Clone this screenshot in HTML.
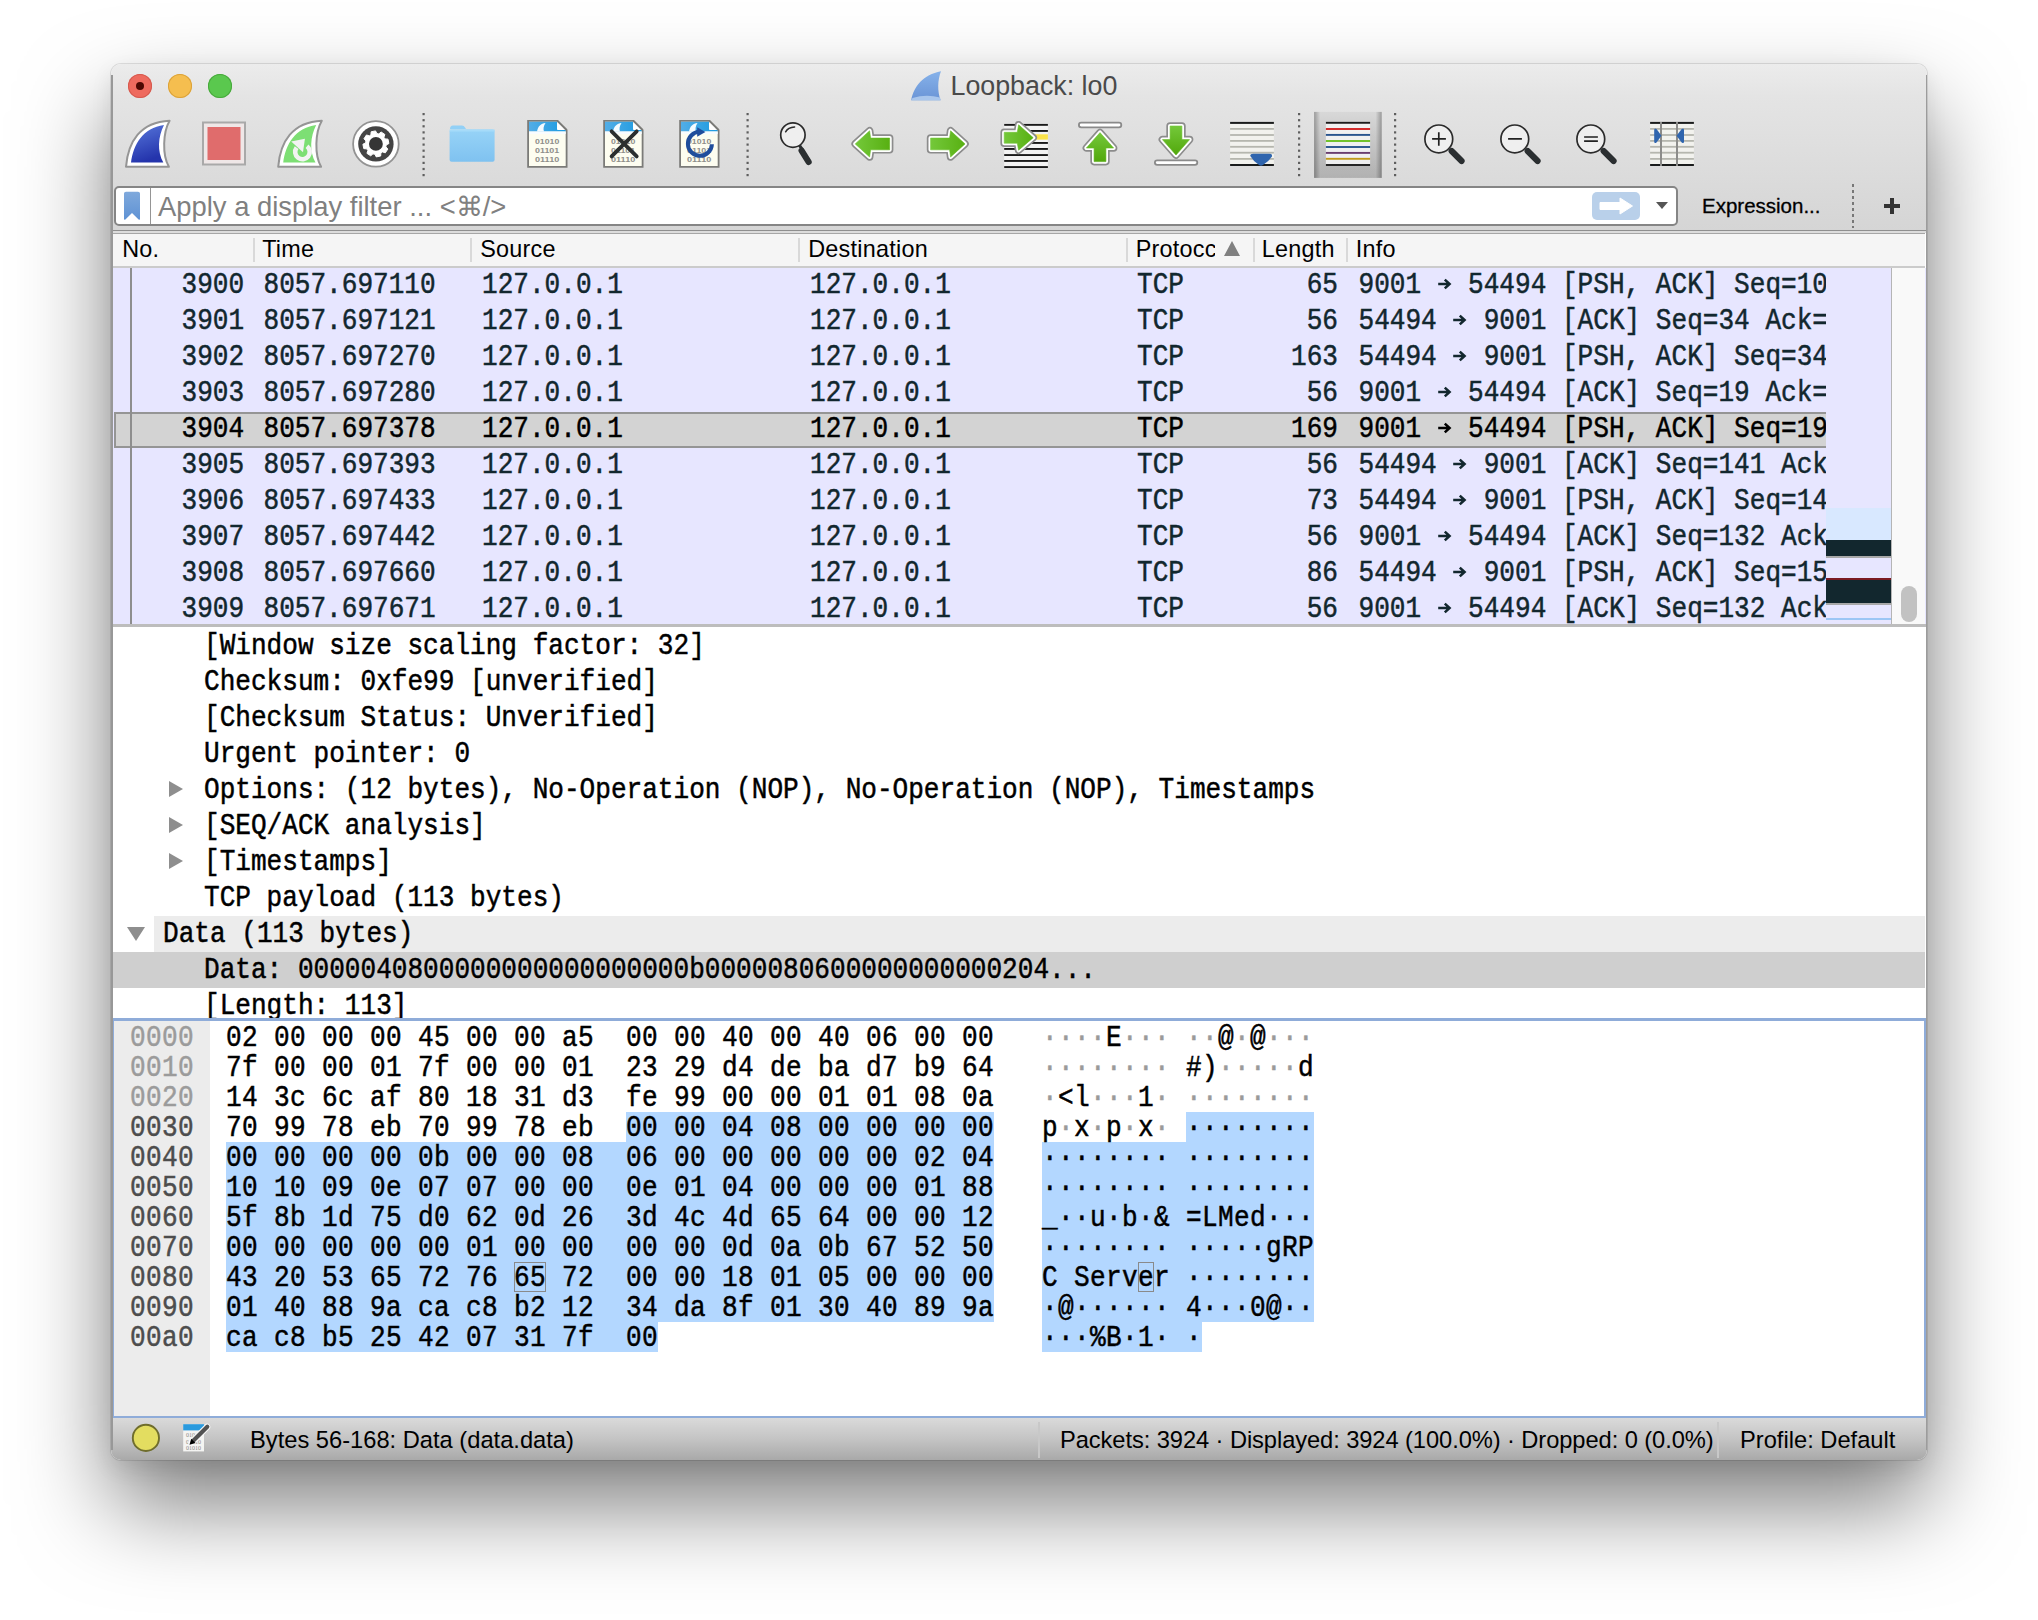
<!DOCTYPE html>
<html><head><meta charset="utf-8"><style>
*{margin:0;padding:0;box-sizing:border-box}
html,body{width:2038px;height:1620px;background:#fff;overflow:hidden;position:relative}
body{font-family:"Liberation Sans",sans-serif}
.a{position:absolute}
.m{font-family:"Liberation Mono",monospace;font-size:26.08px;white-space:pre;position:absolute;-webkit-text-stroke:0.45px currentColor}
.ar{font-weight:bold}
.r36{transform-origin:0 24.94px;transform:scaleY(1.11)}
.r30{transform-origin:0 21.94px;transform:scaleY(1.11)}
.s{font-family:"Liberation Sans",sans-serif;white-space:pre;position:absolute}
#win{position:absolute;left:111px;top:64px;width:1816px;height:1396px;border-radius:10px;overflow:hidden;background:#fff;
 box-shadow:0 0 0 1px rgba(0,0,0,0.10),0 46px 90px rgba(0,0,0,0.5),0 8px 22px rgba(0,0,0,0.08)}
</style></head><body>
<div id="win"><div class="a" style="left:-111px;top:-64px;width:2038px;height:1620px">
<div class="a" style="left:111px;top:63px;width:1816px;height:168px;background:linear-gradient(#ececec,#e4e4e4 20%,#d5d5d5)"></div>
<div class="a" style="left:111px;top:230px;width:1816px;height:1.2px;background:#8f8f8f"></div>
<div class="a" style="left:111px;top:231.2px;width:1816px;height:1.8px;background:#dcdcdc"></div>
<div class="a" style="left:128px;top:74px;width:24px;height:24px;border-radius:50%;background:#ee6a5e;box-shadow:inset 0 0 0 1px #d55a4f"></div>
<div class="a" style="left:168px;top:74px;width:24px;height:24px;border-radius:50%;background:#f5be4f;box-shadow:inset 0 0 0 1px #dba23a"></div>
<div class="a" style="left:208px;top:74px;width:24px;height:24px;border-radius:50%;background:#5ac84e;box-shadow:inset 0 0 0 1px #48a83d"></div>
<div class="a" style="left:136px;top:82px;width:8px;height:8px;border-radius:50%;background:#4d0802"></div>
<div class="s" style="left:950.5px;top:71px;font-size:26.8px;color:#4a4a4a">Loopback: lo0</div>
<div class="a" style="left:114px;top:186px;width:1564px;height:40px;border:2px solid #858585;border-radius:5px;background:#fff"></div>
<div class="a" style="left:149.5px;top:188px;width:1.6px;height:36px;background:#959595"></div>
<div class="s" style="left:158px;top:191.2px;font-size:27.4px;color:#808080">Apply a display filter ... &lt;⌘/&gt;</div>
<div class="a" style="left:1592px;top:192px;width:48px;height:28px;border-radius:5px;background:#b9d0ea"></div>
<div class="a" style="left:1656px;top:202px;width:0;height:0;border-left:6.5px solid transparent;border-right:6.5px solid transparent;border-top:7px solid #555"></div>
<div class="s" style="left:1702px;top:194px;font-size:20.5px;color:#000;-webkit-text-stroke:0.3px #000">Expression...</div>
<div class="a" style="left:1852px;top:184px;width:2px;height:44px;background-image:linear-gradient(#777 50%,transparent 50%);background-size:2px 6px"></div>
<div class="a" style="left:1884px;top:204px;width:16px;height:4px;background:#333"></div><div class="a" style="left:1890px;top:198px;width:4px;height:16px;background:#333"></div>
<div class="a" style="left:112px;top:233px;width:1813px;height:35px;background:#f5f5f5;border-top:1.2px solid #a6a6a6;border-bottom:2px solid #cbcbcb;border-left:1px solid #dadada"></div>
<div class="s" style="left:122.2px;top:236px;font-size:23.4px;letter-spacing:0.25px;color:#000">No.</div>
<div class="s" style="left:262.2px;top:236px;font-size:23.4px;letter-spacing:0.25px;color:#000">Time</div>
<div class="s" style="left:480.2px;top:236px;font-size:23.4px;letter-spacing:0.25px;color:#000">Source</div>
<div class="s" style="left:808.2px;top:236px;font-size:23.4px;letter-spacing:0.25px;color:#000">Destination</div>
<div class="a" style="left:1135px;top:234px;width:79.5px;height:32px;overflow:hidden"><div class="s" style="left:0.7px;top:2px;font-size:23.4px;letter-spacing:0.25px;color:#000">Protocc</div></div>
<div class="s" style="left:1261.7px;top:236px;font-size:23.4px;letter-spacing:0.25px;color:#000">Length</div>
<div class="s" style="left:1355.7px;top:236px;font-size:23.4px;letter-spacing:0.25px;color:#000">Info</div>
<div class="a" style="left:253px;top:238px;width:2px;height:24px;background:#d9d9d9"></div>
<div class="a" style="left:470px;top:238px;width:2px;height:24px;background:#d9d9d9"></div>
<div class="a" style="left:798px;top:238px;width:2px;height:24px;background:#d9d9d9"></div>
<div class="a" style="left:1126px;top:238px;width:2px;height:24px;background:#d9d9d9"></div>
<div class="a" style="left:1253px;top:238px;width:2px;height:24px;background:#d9d9d9"></div>
<div class="a" style="left:1346px;top:238px;width:2px;height:24px;background:#d9d9d9"></div>
<div class="a" style="left:1224px;top:241px;width:0;height:0;border-left:8px solid transparent;border-right:8px solid transparent;border-bottom:15px solid #808080"></div>
<div class="a" style="left:112px;top:268px;width:1814px;height:357px;background:#e7e6ff"></div>
<div class="m r36" style="left:181.5px;top:268px;line-height:36px;color:#12272e">3900</div>
<div class="m r36" style="left:263.5px;top:268px;line-height:36px;color:#12272e">8057.697110</div>
<div class="m r36" style="left:482.0px;top:268px;line-height:36px;color:#12272e">127.0.0.1</div>
<div class="m r36" style="left:810.0px;top:268px;line-height:36px;color:#12272e">127.0.0.1</div>
<div class="m r36" style="left:1137.0px;top:268px;line-height:36px;color:#12272e">TCP</div>
<div class="m r36" style="right:700.0px;top:268px;line-height:36px;color:#12272e">65</div>
<div class="a" style="left:1358.5px;top:268px;width:467.5px;height:36px;overflow:hidden"><div class="m r36" style="left:0;top:0;line-height:36px;color:#12272e">9001   54494 [PSH, ACK] Seq=10</div></div>
<svg class="a" style="left:1436.75px;top:278.2px;width:16px;height:12px;overflow:visible" viewBox="0 0 16 12"><path d="M1.2,6 H12 M7.8,1.6 L12.6,6 L7.8,10.4" fill="none" stroke="#12272e" stroke-width="2.5"/></svg>
<div class="m r36" style="left:181.5px;top:304px;line-height:36px;color:#12272e">3901</div>
<div class="m r36" style="left:263.5px;top:304px;line-height:36px;color:#12272e">8057.697121</div>
<div class="m r36" style="left:482.0px;top:304px;line-height:36px;color:#12272e">127.0.0.1</div>
<div class="m r36" style="left:810.0px;top:304px;line-height:36px;color:#12272e">127.0.0.1</div>
<div class="m r36" style="left:1137.0px;top:304px;line-height:36px;color:#12272e">TCP</div>
<div class="m r36" style="right:700.0px;top:304px;line-height:36px;color:#12272e">56</div>
<div class="a" style="left:1358.5px;top:304px;width:467.5px;height:36px;overflow:hidden"><div class="m r36" style="left:0;top:0;line-height:36px;color:#12272e">54494   9001 [ACK] Seq=34 Ack=</div></div>
<svg class="a" style="left:1452.40px;top:314.2px;width:16px;height:12px;overflow:visible" viewBox="0 0 16 12"><path d="M1.2,6 H12 M7.8,1.6 L12.6,6 L7.8,10.4" fill="none" stroke="#12272e" stroke-width="2.5"/></svg>
<div class="m r36" style="left:181.5px;top:340px;line-height:36px;color:#12272e">3902</div>
<div class="m r36" style="left:263.5px;top:340px;line-height:36px;color:#12272e">8057.697270</div>
<div class="m r36" style="left:482.0px;top:340px;line-height:36px;color:#12272e">127.0.0.1</div>
<div class="m r36" style="left:810.0px;top:340px;line-height:36px;color:#12272e">127.0.0.1</div>
<div class="m r36" style="left:1137.0px;top:340px;line-height:36px;color:#12272e">TCP</div>
<div class="m r36" style="right:700.0px;top:340px;line-height:36px;color:#12272e">163</div>
<div class="a" style="left:1358.5px;top:340px;width:467.5px;height:36px;overflow:hidden"><div class="m r36" style="left:0;top:0;line-height:36px;color:#12272e">54494   9001 [PSH, ACK] Seq=34</div></div>
<svg class="a" style="left:1452.40px;top:350.2px;width:16px;height:12px;overflow:visible" viewBox="0 0 16 12"><path d="M1.2,6 H12 M7.8,1.6 L12.6,6 L7.8,10.4" fill="none" stroke="#12272e" stroke-width="2.5"/></svg>
<div class="m r36" style="left:181.5px;top:376px;line-height:36px;color:#12272e">3903</div>
<div class="m r36" style="left:263.5px;top:376px;line-height:36px;color:#12272e">8057.697280</div>
<div class="m r36" style="left:482.0px;top:376px;line-height:36px;color:#12272e">127.0.0.1</div>
<div class="m r36" style="left:810.0px;top:376px;line-height:36px;color:#12272e">127.0.0.1</div>
<div class="m r36" style="left:1137.0px;top:376px;line-height:36px;color:#12272e">TCP</div>
<div class="m r36" style="right:700.0px;top:376px;line-height:36px;color:#12272e">56</div>
<div class="a" style="left:1358.5px;top:376px;width:467.5px;height:36px;overflow:hidden"><div class="m r36" style="left:0;top:0;line-height:36px;color:#12272e">9001   54494 [ACK] Seq=19 Ack=</div></div>
<svg class="a" style="left:1436.75px;top:386.2px;width:16px;height:12px;overflow:visible" viewBox="0 0 16 12"><path d="M1.2,6 H12 M7.8,1.6 L12.6,6 L7.8,10.4" fill="none" stroke="#12272e" stroke-width="2.5"/></svg>
<div class="a" style="left:114px;top:412px;width:1712px;height:36px;background:#d3d3d3;border:2px solid #959595;border-right:none"></div>
<div class="m r36" style="left:181.5px;top:412px;line-height:36px;color:#000">3904</div>
<div class="m r36" style="left:263.5px;top:412px;line-height:36px;color:#000">8057.697378</div>
<div class="m r36" style="left:482.0px;top:412px;line-height:36px;color:#000">127.0.0.1</div>
<div class="m r36" style="left:810.0px;top:412px;line-height:36px;color:#000">127.0.0.1</div>
<div class="m r36" style="left:1137.0px;top:412px;line-height:36px;color:#000">TCP</div>
<div class="m r36" style="right:700.0px;top:412px;line-height:36px;color:#000">169</div>
<div class="a" style="left:1358.5px;top:412px;width:467.5px;height:36px;overflow:hidden"><div class="m r36" style="left:0;top:0;line-height:36px;color:#000">9001   54494 [PSH, ACK] Seq=19</div></div>
<svg class="a" style="left:1436.75px;top:422.2px;width:16px;height:12px;overflow:visible" viewBox="0 0 16 12"><path d="M1.2,6 H12 M7.8,1.6 L12.6,6 L7.8,10.4" fill="none" stroke="#000" stroke-width="2.5"/></svg>
<div class="m r36" style="left:181.5px;top:448px;line-height:36px;color:#12272e">3905</div>
<div class="m r36" style="left:263.5px;top:448px;line-height:36px;color:#12272e">8057.697393</div>
<div class="m r36" style="left:482.0px;top:448px;line-height:36px;color:#12272e">127.0.0.1</div>
<div class="m r36" style="left:810.0px;top:448px;line-height:36px;color:#12272e">127.0.0.1</div>
<div class="m r36" style="left:1137.0px;top:448px;line-height:36px;color:#12272e">TCP</div>
<div class="m r36" style="right:700.0px;top:448px;line-height:36px;color:#12272e">56</div>
<div class="a" style="left:1358.5px;top:448px;width:467.5px;height:36px;overflow:hidden"><div class="m r36" style="left:0;top:0;line-height:36px;color:#12272e">54494   9001 [ACK] Seq=141 Ack</div></div>
<svg class="a" style="left:1452.40px;top:458.2px;width:16px;height:12px;overflow:visible" viewBox="0 0 16 12"><path d="M1.2,6 H12 M7.8,1.6 L12.6,6 L7.8,10.4" fill="none" stroke="#12272e" stroke-width="2.5"/></svg>
<div class="m r36" style="left:181.5px;top:484px;line-height:36px;color:#12272e">3906</div>
<div class="m r36" style="left:263.5px;top:484px;line-height:36px;color:#12272e">8057.697433</div>
<div class="m r36" style="left:482.0px;top:484px;line-height:36px;color:#12272e">127.0.0.1</div>
<div class="m r36" style="left:810.0px;top:484px;line-height:36px;color:#12272e">127.0.0.1</div>
<div class="m r36" style="left:1137.0px;top:484px;line-height:36px;color:#12272e">TCP</div>
<div class="m r36" style="right:700.0px;top:484px;line-height:36px;color:#12272e">73</div>
<div class="a" style="left:1358.5px;top:484px;width:467.5px;height:36px;overflow:hidden"><div class="m r36" style="left:0;top:0;line-height:36px;color:#12272e">54494   9001 [PSH, ACK] Seq=14</div></div>
<svg class="a" style="left:1452.40px;top:494.2px;width:16px;height:12px;overflow:visible" viewBox="0 0 16 12"><path d="M1.2,6 H12 M7.8,1.6 L12.6,6 L7.8,10.4" fill="none" stroke="#12272e" stroke-width="2.5"/></svg>
<div class="m r36" style="left:181.5px;top:520px;line-height:36px;color:#12272e">3907</div>
<div class="m r36" style="left:263.5px;top:520px;line-height:36px;color:#12272e">8057.697442</div>
<div class="m r36" style="left:482.0px;top:520px;line-height:36px;color:#12272e">127.0.0.1</div>
<div class="m r36" style="left:810.0px;top:520px;line-height:36px;color:#12272e">127.0.0.1</div>
<div class="m r36" style="left:1137.0px;top:520px;line-height:36px;color:#12272e">TCP</div>
<div class="m r36" style="right:700.0px;top:520px;line-height:36px;color:#12272e">56</div>
<div class="a" style="left:1358.5px;top:520px;width:467.5px;height:36px;overflow:hidden"><div class="m r36" style="left:0;top:0;line-height:36px;color:#12272e">9001   54494 [ACK] Seq=132 Ack</div></div>
<svg class="a" style="left:1436.75px;top:530.2px;width:16px;height:12px;overflow:visible" viewBox="0 0 16 12"><path d="M1.2,6 H12 M7.8,1.6 L12.6,6 L7.8,10.4" fill="none" stroke="#12272e" stroke-width="2.5"/></svg>
<div class="m r36" style="left:181.5px;top:556px;line-height:36px;color:#12272e">3908</div>
<div class="m r36" style="left:263.5px;top:556px;line-height:36px;color:#12272e">8057.697660</div>
<div class="m r36" style="left:482.0px;top:556px;line-height:36px;color:#12272e">127.0.0.1</div>
<div class="m r36" style="left:810.0px;top:556px;line-height:36px;color:#12272e">127.0.0.1</div>
<div class="m r36" style="left:1137.0px;top:556px;line-height:36px;color:#12272e">TCP</div>
<div class="m r36" style="right:700.0px;top:556px;line-height:36px;color:#12272e">86</div>
<div class="a" style="left:1358.5px;top:556px;width:467.5px;height:36px;overflow:hidden"><div class="m r36" style="left:0;top:0;line-height:36px;color:#12272e">54494   9001 [PSH, ACK] Seq=15</div></div>
<svg class="a" style="left:1452.40px;top:566.2px;width:16px;height:12px;overflow:visible" viewBox="0 0 16 12"><path d="M1.2,6 H12 M7.8,1.6 L12.6,6 L7.8,10.4" fill="none" stroke="#12272e" stroke-width="2.5"/></svg>
<div class="m r36" style="left:181.5px;top:592px;line-height:36px;color:#12272e">3909</div>
<div class="m r36" style="left:263.5px;top:592px;line-height:36px;color:#12272e">8057.697671</div>
<div class="m r36" style="left:482.0px;top:592px;line-height:36px;color:#12272e">127.0.0.1</div>
<div class="m r36" style="left:810.0px;top:592px;line-height:36px;color:#12272e">127.0.0.1</div>
<div class="m r36" style="left:1137.0px;top:592px;line-height:36px;color:#12272e">TCP</div>
<div class="m r36" style="right:700.0px;top:592px;line-height:36px;color:#12272e">56</div>
<div class="a" style="left:1358.5px;top:592px;width:467.5px;height:36px;overflow:hidden"><div class="m r36" style="left:0;top:0;line-height:36px;color:#12272e">9001   54494 [ACK] Seq=132 Ack</div></div>
<svg class="a" style="left:1436.75px;top:602.2px;width:16px;height:12px;overflow:visible" viewBox="0 0 16 12"><path d="M1.2,6 H12 M7.8,1.6 L12.6,6 L7.8,10.4" fill="none" stroke="#12272e" stroke-width="2.5"/></svg>
<div class="a" style="left:130px;top:268px;width:2px;height:356px;background:#8e8e8e"></div>
<div class="a" style="left:1826px;top:268px;width:65px;height:240px;background:#e7e6ff"></div>
<div class="a" style="left:1826px;top:508px;width:65px;height:32px;background:#d8e8ff"></div>
<div class="a" style="left:1826px;top:540px;width:65px;height:16px;background:#12272e"></div>
<div class="a" style="left:1826px;top:556px;width:65px;height:2px;background:#a8a8a8"></div>
<div class="a" style="left:1826px;top:558px;width:65px;height:20px;background:#e7e6ff"></div>
<div class="a" style="left:1826px;top:578px;width:65px;height:2px;background:#7a1a22"></div>
<div class="a" style="left:1826px;top:580px;width:65px;height:23px;background:#12272e"></div>
<div class="a" style="left:1826px;top:603px;width:65px;height:2px;background:#a8a8a8"></div>
<div class="a" style="left:1826px;top:605px;width:65px;height:13px;background:#e7e6ff"></div>
<div class="a" style="left:1826px;top:618px;width:65px;height:2px;background:#9cc6f5"></div>
<div class="a" style="left:1826px;top:620px;width:65px;height:4px;background:#e7e6ff"></div>
<div class="a" style="left:1891px;top:268px;width:1px;height:356px;background:#b5b5b5"></div>
<div class="a" style="left:1892px;top:268px;width:33px;height:356px;background:#f9f9f9"></div>
<div class="a" style="left:1901px;top:586px;width:16px;height:36px;border-radius:8px;background:#c2c2c2"></div>
<div class="a" style="left:112px;top:624px;width:1814px;height:3px;background:#bdbdbd"></div>
<div class="a" style="left:112px;top:627px;width:1814px;height:392px;background:#fff"></div>
<div class="m r36" style="left:204px;top:628.75px;line-height:36px;color:#000">[Window size scaling factor: 32]</div>
<div class="m r36" style="left:204px;top:664.75px;line-height:36px;color:#000">Checksum: 0xfe99 [unverified]</div>
<div class="m r36" style="left:204px;top:700.75px;line-height:36px;color:#000">[Checksum Status: Unverified]</div>
<div class="m r36" style="left:204px;top:736.75px;line-height:36px;color:#000">Urgent pointer: 0</div>
<div class="a" style="left:169px;top:781.2px;width:0;height:0;border-top:8.9px solid transparent;border-bottom:8.9px solid transparent;border-left:14.6px solid #8e8e8e"></div>
<div class="m r36" style="left:204px;top:772.75px;line-height:36px;color:#000">Options: (12 bytes), No-Operation (NOP), No-Operation (NOP), Timestamps</div>
<div class="a" style="left:169px;top:817.2px;width:0;height:0;border-top:8.9px solid transparent;border-bottom:8.9px solid transparent;border-left:14.6px solid #8e8e8e"></div>
<div class="m r36" style="left:204px;top:808.75px;line-height:36px;color:#000">[SEQ/ACK analysis]</div>
<div class="a" style="left:169px;top:853.2px;width:0;height:0;border-top:8.9px solid transparent;border-bottom:8.9px solid transparent;border-left:14.6px solid #8e8e8e"></div>
<div class="m r36" style="left:204px;top:844.75px;line-height:36px;color:#000">[Timestamps]</div>
<div class="m r36" style="left:204px;top:880.75px;line-height:36px;color:#000">TCP payload (113 bytes)</div>
<div class="a" style="left:154px;top:916px;width:1771px;height:36px;background:#ececec"></div>
<div class="a" style="left:127px;top:927.3px;width:0;height:0;border-left:9px solid transparent;border-right:9px solid transparent;border-top:14px solid #8e8e8e"></div>
<div class="m r36" style="left:163px;top:916.75px;line-height:36px;color:#000">Data (113 bytes)</div>
<div class="a" style="left:113px;top:952px;width:1812px;height:36px;background:#cfcfcf"></div>
<div class="m r36" style="left:204px;top:952.75px;line-height:36px;color:#000">Data: 0000040800000000000000000b0000080600000000000204...</div>
<div class="m r36" style="left:204px;top:988.75px;line-height:36px;color:#000">[Length: 113]</div>
<div class="a" style="left:112px;top:1018px;width:1814px;height:400px;background:#fff;border:2px solid #8facd9;border-top-width:3px"></div>
<div class="a" style="left:114px;top:1021px;width:96px;height:395px;background:#ececec"></div>
<div class="a" style="left:626px;top:1112px;width:368px;height:30px;background:#b3d7ff"></div>
<div class="a" style="left:1186px;top:1112px;width:128px;height:30px;background:#b3d7ff"></div>
<div class="a" style="left:226px;top:1142px;width:768px;height:30px;background:#b3d7ff"></div>
<div class="a" style="left:1042px;top:1142px;width:272px;height:30px;background:#b3d7ff"></div>
<div class="a" style="left:226px;top:1172px;width:768px;height:30px;background:#b3d7ff"></div>
<div class="a" style="left:1042px;top:1172px;width:272px;height:30px;background:#b3d7ff"></div>
<div class="a" style="left:226px;top:1202px;width:768px;height:30px;background:#b3d7ff"></div>
<div class="a" style="left:1042px;top:1202px;width:272px;height:30px;background:#b3d7ff"></div>
<div class="a" style="left:226px;top:1232px;width:768px;height:30px;background:#b3d7ff"></div>
<div class="a" style="left:1042px;top:1232px;width:272px;height:30px;background:#b3d7ff"></div>
<div class="a" style="left:226px;top:1262px;width:768px;height:30px;background:#b3d7ff"></div>
<div class="a" style="left:1042px;top:1262px;width:272px;height:30px;background:#b3d7ff"></div>
<div class="a" style="left:226px;top:1292px;width:768px;height:30px;background:#b3d7ff"></div>
<div class="a" style="left:1042px;top:1292px;width:272px;height:30px;background:#b3d7ff"></div>
<div class="a" style="left:226px;top:1322px;width:432px;height:30px;background:#b3d7ff"></div>
<div class="a" style="left:1042px;top:1322px;width:160px;height:30px;background:#b3d7ff"></div>
<div class="a" style="left:514px;top:1262px;width:32px;height:30px;border:1px solid #8a8a8a"></div>
<div class="a" style="left:1138px;top:1262px;width:16px;height:30px;border:1px solid #8a8a8a"></div>
<div class="m r30" style="left:130px;top:1023.9px;line-height:30px;color:#9b9b9b;letter-spacing:0.35px">0000</div>
<div class="m r30" style="left:226px;top:1023.9px;line-height:30px;color:#000;letter-spacing:0.35px">02 00 00 00 45 00 00 a5  00 00 40 00 40 06 00 00</div>
<div class="m r30" style="left:1042px;top:1023.9px;line-height:30px;color:#000;letter-spacing:0.35px"><span style="color:#9a9a9a">·</span><span style="color:#9a9a9a">·</span><span style="color:#9a9a9a">·</span><span style="color:#9a9a9a">·</span>E<span style="color:#9a9a9a">·</span><span style="color:#9a9a9a">·</span><span style="color:#9a9a9a">·</span> <span style="color:#9a9a9a">·</span><span style="color:#9a9a9a">·</span>@<span style="color:#9a9a9a">·</span>@<span style="color:#9a9a9a">·</span><span style="color:#9a9a9a">·</span><span style="color:#9a9a9a">·</span></div>
<div class="m r30" style="left:130px;top:1053.9px;line-height:30px;color:#9b9b9b;letter-spacing:0.35px">0010</div>
<div class="m r30" style="left:226px;top:1053.9px;line-height:30px;color:#000;letter-spacing:0.35px">7f 00 00 01 7f 00 00 01  23 29 d4 de ba d7 b9 64</div>
<div class="m r30" style="left:1042px;top:1053.9px;line-height:30px;color:#000;letter-spacing:0.35px"><span style="color:#9a9a9a">·</span><span style="color:#9a9a9a">·</span><span style="color:#9a9a9a">·</span><span style="color:#9a9a9a">·</span><span style="color:#9a9a9a">·</span><span style="color:#9a9a9a">·</span><span style="color:#9a9a9a">·</span><span style="color:#9a9a9a">·</span> #)<span style="color:#9a9a9a">·</span><span style="color:#9a9a9a">·</span><span style="color:#9a9a9a">·</span><span style="color:#9a9a9a">·</span><span style="color:#9a9a9a">·</span>d</div>
<div class="m r30" style="left:130px;top:1083.9px;line-height:30px;color:#9b9b9b;letter-spacing:0.35px">0020</div>
<div class="m r30" style="left:226px;top:1083.9px;line-height:30px;color:#000;letter-spacing:0.35px">14 3c 6c af 80 18 31 d3  fe 99 00 00 01 01 08 0a</div>
<div class="m r30" style="left:1042px;top:1083.9px;line-height:30px;color:#000;letter-spacing:0.35px"><span style="color:#9a9a9a">·</span>&lt;l<span style="color:#9a9a9a">·</span><span style="color:#9a9a9a">·</span><span style="color:#9a9a9a">·</span>1<span style="color:#9a9a9a">·</span> <span style="color:#9a9a9a">·</span><span style="color:#9a9a9a">·</span><span style="color:#9a9a9a">·</span><span style="color:#9a9a9a">·</span><span style="color:#9a9a9a">·</span><span style="color:#9a9a9a">·</span><span style="color:#9a9a9a">·</span><span style="color:#9a9a9a">·</span></div>
<div class="m r30" style="left:130px;top:1113.9px;line-height:30px;color:#4d4d4d;letter-spacing:0.35px">0030</div>
<div class="m r30" style="left:226px;top:1113.9px;line-height:30px;color:#000;letter-spacing:0.35px">70 99 78 eb 70 99 78 eb  00 00 04 08 00 00 00 00</div>
<div class="m r30" style="left:1042px;top:1113.9px;line-height:30px;color:#000;letter-spacing:0.35px">p<span style="color:#9a9a9a">·</span>x<span style="color:#9a9a9a">·</span>p<span style="color:#9a9a9a">·</span>x<span style="color:#9a9a9a">·</span> ········</div>
<div class="m r30" style="left:130px;top:1143.9px;line-height:30px;color:#4d4d4d;letter-spacing:0.35px">0040</div>
<div class="m r30" style="left:226px;top:1143.9px;line-height:30px;color:#000;letter-spacing:0.35px">00 00 00 00 0b 00 00 08  06 00 00 00 00 00 02 04</div>
<div class="m r30" style="left:1042px;top:1143.9px;line-height:30px;color:#000;letter-spacing:0.35px">········ ········</div>
<div class="m r30" style="left:130px;top:1173.9px;line-height:30px;color:#4d4d4d;letter-spacing:0.35px">0050</div>
<div class="m r30" style="left:226px;top:1173.9px;line-height:30px;color:#000;letter-spacing:0.35px">10 10 09 0e 07 07 00 00  0e 01 04 00 00 00 01 88</div>
<div class="m r30" style="left:1042px;top:1173.9px;line-height:30px;color:#000;letter-spacing:0.35px">········ ········</div>
<div class="m r30" style="left:130px;top:1203.9px;line-height:30px;color:#4d4d4d;letter-spacing:0.35px">0060</div>
<div class="m r30" style="left:226px;top:1203.9px;line-height:30px;color:#000;letter-spacing:0.35px">5f 8b 1d 75 d0 62 0d 26  3d 4c 4d 65 64 00 00 12</div>
<div class="m r30" style="left:1042px;top:1203.9px;line-height:30px;color:#000;letter-spacing:0.35px">_··u·b·&amp; =LMed···</div>
<div class="m r30" style="left:130px;top:1233.9px;line-height:30px;color:#4d4d4d;letter-spacing:0.35px">0070</div>
<div class="m r30" style="left:226px;top:1233.9px;line-height:30px;color:#000;letter-spacing:0.35px">00 00 00 00 00 01 00 00  00 00 0d 0a 0b 67 52 50</div>
<div class="m r30" style="left:1042px;top:1233.9px;line-height:30px;color:#000;letter-spacing:0.35px">········ ·····gRP</div>
<div class="m r30" style="left:130px;top:1263.9px;line-height:30px;color:#4d4d4d;letter-spacing:0.35px">0080</div>
<div class="m r30" style="left:226px;top:1263.9px;line-height:30px;color:#000;letter-spacing:0.35px">43 20 53 65 72 76 65 72  00 00 18 01 05 00 00 00</div>
<div class="m r30" style="left:1042px;top:1263.9px;line-height:30px;color:#000;letter-spacing:0.35px">C Server ········</div>
<div class="m r30" style="left:130px;top:1293.9px;line-height:30px;color:#4d4d4d;letter-spacing:0.35px">0090</div>
<div class="m r30" style="left:226px;top:1293.9px;line-height:30px;color:#000;letter-spacing:0.35px">01 40 88 9a ca c8 b2 12  34 da 8f 01 30 40 89 9a</div>
<div class="m r30" style="left:1042px;top:1293.9px;line-height:30px;color:#000;letter-spacing:0.35px">·@······ 4···0@··</div>
<div class="m r30" style="left:130px;top:1323.9px;line-height:30px;color:#4d4d4d;letter-spacing:0.35px">00a0</div>
<div class="m r30" style="left:226px;top:1323.9px;line-height:30px;color:#000;letter-spacing:0.35px">ca c8 b5 25 42 07 31 7f  00</div>
<div class="m r30" style="left:1042px;top:1323.9px;line-height:30px;color:#000;letter-spacing:0.35px">···%B·1· ·</div>
<div class="a" style="left:111px;top:1418px;width:1816px;height:42px;background:linear-gradient(#dadada,#c4c4c4 50%,#a9a9a9)"></div>
<div class="s" style="left:250px;top:1426.5px;font-size:23.7px;color:#000">Bytes 56-168: Data (data.data)</div>
<div class="a" style="left:1038px;top:1422px;width:2px;height:36px;background:#c8c8c8"></div>
<div class="s" style="left:1060px;top:1426.5px;font-size:23.7px;letter-spacing:-0.08px;color:#000">Packets: 3924 · Displayed: 3924 (100.0%) · Dropped: 0 (0.0%)</div>
<div class="a" style="left:1717px;top:1422px;width:2px;height:36px;background:#c8c8c8"></div>
<div class="s" style="left:1740px;top:1426.5px;font-size:23.7px;color:#000">Profile: Default</div>
<div class="a" style="left:111.3px;top:75px;width:1.4px;height:1375px;background:#989898"></div>
<div class="a" style="left:1925.8px;top:75px;width:1.2px;height:1375px;background:#9c9c9c"></div>
<svg class="a" style="left:0;top:0;width:2038px;height:1620px;pointer-events:none" viewBox="0 0 2038 1620"><defs>
<linearGradient id="gBlue" x1="0" y1="0" x2="0.3" y2="1"><stop offset="0" stop-color="#5878dc"/><stop offset="1" stop-color="#2434ac"/></linearGradient>
<linearGradient id="gGreen" x1="0" y1="0" x2="0" y2="1"><stop offset="0" stop-color="#74c83a"/><stop offset="1" stop-color="#52a80c"/></linearGradient>
<linearGradient id="gGreenH" x1="0" y1="0" x2="1" y2="0"><stop offset="0" stop-color="#74c83a"/><stop offset="1" stop-color="#58b012"/></linearGradient>
<linearGradient id="gDocHdr" x1="0" y1="0" x2="1" y2="0"><stop offset="0" stop-color="#52ade6"/><stop offset="1" stop-color="#1c9ae0"/></linearGradient>
<linearGradient id="gBk" x1="0" y1="0" x2="0" y2="1"><stop offset="0" stop-color="#7fa9dc"/><stop offset="1" stop-color="#5f92d4"/></linearGradient>
<linearGradient id="gFolder" x1="0" y1="0" x2="0" y2="1"><stop offset="0" stop-color="#97d3f7"/><stop offset="1" stop-color="#7fc2f0"/></linearGradient>
</defs><path d="M126,166.8 C128,142 140,122 169.6,120.7 C163,132 162,155 168.9,166.8 Z" fill="#fff" stroke="#959595" stroke-width="2" stroke-linejoin="round"/><path d="M131,162.6 C133.5,144 143,128 164,125 C158,137 157,151 163.3,162.6 Z" fill="url(#gBlue)"/><rect x="203" y="122.5" width="42" height="42" fill="#efe7e7" stroke="#a9a9a9" stroke-width="2"/><rect x="207.5" y="127" width="33" height="33" fill="#e06c6c"/><path d="M278.2,166.8 C280.2,142 292.2,122 321.79999999999995,120.7 C315.2,132 314.2,155 321.1,166.8 Z" fill="#fff" stroke="#959595" stroke-width="2" stroke-linejoin="round"/><path d="M283.2,162.6 C285.7,144 295.2,128 316.2,125 C310.2,137 309.2,151 315.5,162.6 Z" fill="#7ddf74"/><path d="M296.6,147.6 A7.3,7.3 0 1 0 307,146.2" fill="none" stroke="#f3f3f3" stroke-width="4.6"/><path d="M291.2,141.4 L304.9,138.7 L303,152.2 Z" fill="#f3f3f3"/><circle cx="375.9" cy="143.9" r="22.8" fill="#fff" stroke="#939393" stroke-width="1.8"/><circle cx="375.9" cy="143.9" r="17.7" fill="#444"/><polygon points="385.87,146.85 387.82,149.08 385.33,152.85 382.52,151.92 380.86,153.04 380.66,156.00 376.24,156.90 374.90,154.25 372.95,153.87 370.72,155.82 366.95,153.33 367.88,150.52 366.76,148.86 363.80,148.66 362.90,144.24 365.55,142.90 365.93,140.95 363.98,138.72 366.47,134.95 369.28,135.88 370.94,134.76 371.14,131.80 375.56,130.90 376.90,133.55 378.85,133.93 381.08,131.98 384.85,134.47 383.92,137.28 385.04,138.94 388.00,139.14 388.90,143.56 386.25,144.90" fill="#fff" stroke="#fff" stroke-width="1" stroke-linejoin="round"/><circle cx="375.9" cy="143.9" r="6.9" fill="#353535"/><rect x="422.5" y="113.0" width="2.2" height="2.2" fill="#5e5e5e"/><rect x="422.5" y="119.1" width="2.2" height="2.2" fill="#5e5e5e"/><rect x="422.5" y="125.2" width="2.2" height="2.2" fill="#5e5e5e"/><rect x="422.5" y="131.3" width="2.2" height="2.2" fill="#5e5e5e"/><rect x="422.5" y="137.4" width="2.2" height="2.2" fill="#5e5e5e"/><rect x="422.5" y="143.5" width="2.2" height="2.2" fill="#5e5e5e"/><rect x="422.5" y="149.6" width="2.2" height="2.2" fill="#5e5e5e"/><rect x="422.5" y="155.7" width="2.2" height="2.2" fill="#5e5e5e"/><rect x="422.5" y="161.8" width="2.2" height="2.2" fill="#5e5e5e"/><rect x="422.5" y="167.9" width="2.2" height="2.2" fill="#5e5e5e"/><rect x="422.5" y="174.0" width="2.2" height="2.2" fill="#5e5e5e"/><rect x="746.5" y="113.0" width="2.2" height="2.2" fill="#5e5e5e"/><rect x="746.5" y="119.1" width="2.2" height="2.2" fill="#5e5e5e"/><rect x="746.5" y="125.2" width="2.2" height="2.2" fill="#5e5e5e"/><rect x="746.5" y="131.3" width="2.2" height="2.2" fill="#5e5e5e"/><rect x="746.5" y="137.4" width="2.2" height="2.2" fill="#5e5e5e"/><rect x="746.5" y="143.5" width="2.2" height="2.2" fill="#5e5e5e"/><rect x="746.5" y="149.6" width="2.2" height="2.2" fill="#5e5e5e"/><rect x="746.5" y="155.7" width="2.2" height="2.2" fill="#5e5e5e"/><rect x="746.5" y="161.8" width="2.2" height="2.2" fill="#5e5e5e"/><rect x="746.5" y="167.9" width="2.2" height="2.2" fill="#5e5e5e"/><rect x="746.5" y="174.0" width="2.2" height="2.2" fill="#5e5e5e"/><rect x="1298" y="113.0" width="2.2" height="2.2" fill="#5e5e5e"/><rect x="1298" y="119.1" width="2.2" height="2.2" fill="#5e5e5e"/><rect x="1298" y="125.2" width="2.2" height="2.2" fill="#5e5e5e"/><rect x="1298" y="131.3" width="2.2" height="2.2" fill="#5e5e5e"/><rect x="1298" y="137.4" width="2.2" height="2.2" fill="#5e5e5e"/><rect x="1298" y="143.5" width="2.2" height="2.2" fill="#5e5e5e"/><rect x="1298" y="149.6" width="2.2" height="2.2" fill="#5e5e5e"/><rect x="1298" y="155.7" width="2.2" height="2.2" fill="#5e5e5e"/><rect x="1298" y="161.8" width="2.2" height="2.2" fill="#5e5e5e"/><rect x="1298" y="167.9" width="2.2" height="2.2" fill="#5e5e5e"/><rect x="1298" y="174.0" width="2.2" height="2.2" fill="#5e5e5e"/><rect x="1394" y="113.0" width="2.2" height="2.2" fill="#5e5e5e"/><rect x="1394" y="119.1" width="2.2" height="2.2" fill="#5e5e5e"/><rect x="1394" y="125.2" width="2.2" height="2.2" fill="#5e5e5e"/><rect x="1394" y="131.3" width="2.2" height="2.2" fill="#5e5e5e"/><rect x="1394" y="137.4" width="2.2" height="2.2" fill="#5e5e5e"/><rect x="1394" y="143.5" width="2.2" height="2.2" fill="#5e5e5e"/><rect x="1394" y="149.6" width="2.2" height="2.2" fill="#5e5e5e"/><rect x="1394" y="155.7" width="2.2" height="2.2" fill="#5e5e5e"/><rect x="1394" y="161.8" width="2.2" height="2.2" fill="#5e5e5e"/><rect x="1394" y="167.9" width="2.2" height="2.2" fill="#5e5e5e"/><rect x="1394" y="174.0" width="2.2" height="2.2" fill="#5e5e5e"/><path d="M450,129 Q450,125.5 453,125.5 L462,125.5 Q464,125.5 465,127.5 L466,129 Z" fill="#92d0f6"/><rect x="449.6" y="129.5" width="45" height="32.2" rx="2" fill="url(#gFolder)"/><rect x="449.6" y="129.5" width="45" height="2" fill="#a6dbf9"/><path d="M528.1,120.8 L557.4,120.8 L566.6,130 L566.6,166.8 L528.1,166.8 Z" fill="#fdfdf0" stroke="#7b7b78" stroke-width="1.8" stroke-linejoin="miter"/><path d="M529,121.7 L557,121.7 L557,129.6 L565.7,129.6 L565.7,131.6 L529,131.6 Z" fill="url(#gDocHdr)"/><path d="M557.4,121.7 L565.7,130 L557.4,130 Z" fill="#fff"/><path d="M557.4,120.8 L566.6,130" stroke="#7b7b78" stroke-width="1.8"/><path d="M537,131.6 C538,126 541,123.5 545.5,123 C543.5,126 543,129 544,131.6 Z" fill="#f4fbff"/><path d="M529,131.6 L565.7,131.6 L565.7,134 L529,134 Z" fill="#f8fcff"/><text x="535" y="143.6" font-family="Liberation Sans" font-weight="bold" font-size="6.6" fill="#8e8e8a" textLength="24.3" lengthAdjust="spacingAndGlyphs">01010</text><text x="535" y="152.54999999999998" font-family="Liberation Sans" font-weight="bold" font-size="6.6" fill="#8e8e8a" textLength="24.3" lengthAdjust="spacingAndGlyphs">01101</text><text x="535" y="161.5" font-family="Liberation Sans" font-weight="bold" font-size="6.6" fill="#8e8e8a" textLength="24.3" lengthAdjust="spacingAndGlyphs">01110</text><path d="M604.1,120.8 L633.4,120.8 L642.6,130 L642.6,166.8 L604.1,166.8 Z" fill="#fdfdf0" stroke="#7b7b78" stroke-width="1.8" stroke-linejoin="miter"/><path d="M605,121.7 L633,121.7 L633,129.6 L641.7,129.6 L641.7,131.6 L605,131.6 Z" fill="url(#gDocHdr)"/><path d="M633.4,121.7 L641.7,130 L633.4,130 Z" fill="#fff"/><path d="M633.4,120.8 L642.6,130" stroke="#7b7b78" stroke-width="1.8"/><path d="M613,131.6 C614,126 617,123.5 621.5,123 C619.5,126 619,129 620,131.6 Z" fill="#f4fbff"/><path d="M605,131.6 L641.7,131.6 L641.7,134 L605,134 Z" fill="#f8fcff"/><text x="611" y="143.6" font-family="Liberation Sans" font-weight="bold" font-size="6.6" fill="#8e8e8a" textLength="24.3" lengthAdjust="spacingAndGlyphs">01010</text><text x="611" y="152.54999999999998" font-family="Liberation Sans" font-weight="bold" font-size="6.6" fill="#8e8e8a" textLength="24.3" lengthAdjust="spacingAndGlyphs">01101</text><text x="611" y="161.5" font-family="Liberation Sans" font-weight="bold" font-size="6.6" fill="#8e8e8a" textLength="24.3" lengthAdjust="spacingAndGlyphs">01110</text><path d="M680.1,120.8 L709.4,120.8 L718.6,130 L718.6,166.8 L680.1,166.8 Z" fill="#fdfdf0" stroke="#7b7b78" stroke-width="1.8" stroke-linejoin="miter"/><path d="M681,121.7 L709,121.7 L709,129.6 L717.7,129.6 L717.7,131.6 L681,131.6 Z" fill="url(#gDocHdr)"/><path d="M709.4,121.7 L717.7,130 L709.4,130 Z" fill="#fff"/><path d="M709.4,120.8 L718.6,130" stroke="#7b7b78" stroke-width="1.8"/><path d="M689,131.6 C690,126 693,123.5 697.5,123 C695.5,126 695,129 696,131.6 Z" fill="#f4fbff"/><path d="M681,131.6 L717.7,131.6 L717.7,134 L681,134 Z" fill="#f8fcff"/><text x="687" y="143.6" font-family="Liberation Sans" font-weight="bold" font-size="6.6" fill="#8e8e8a" textLength="24.3" lengthAdjust="spacingAndGlyphs">01010</text><text x="687" y="152.54999999999998" font-family="Liberation Sans" font-weight="bold" font-size="6.6" fill="#8e8e8a" textLength="24.3" lengthAdjust="spacingAndGlyphs">01101</text><text x="687" y="161.5" font-family="Liberation Sans" font-weight="bold" font-size="6.6" fill="#8e8e8a" textLength="24.3" lengthAdjust="spacingAndGlyphs">01110</text><path d="M611.6,131.3 L636.7,156.4 M636.7,131.3 L611.6,156.4" stroke="#2b2f2f" stroke-width="3.8" stroke-linecap="round"/><path d="M699.5,131.8 A12,12 0 1 0 711.9,144.2" fill="none" stroke="#1f4d9c" stroke-width="4"/><path d="M697.2,127.2 L705.4,132 L697.2,136.8 Z" fill="#1f4d9c"/><path d="M799.6,145.5 L802.5,150" stroke="#2b2f31" stroke-width="3.2"/><circle cx="792.9" cy="135.1" r="12.2" fill="#efefef" stroke="#2b2b2b" stroke-width="1.7"/><path d="M801.6,150.6 L808.6,161.9" stroke="#2b2f31" stroke-width="6.2" stroke-linecap="round"/><path d="M785.6,131.8 Q788,127.5 794.6,127" fill="none" stroke="#2b2b2b" stroke-width="1.5" stroke-linecap="round"/><polygon points="855.20,143.90 869.60,130.80 870.60,138.10 889.60,138.10 889.60,149.80 870.60,149.80 869.60,157.00" fill="#8c8c8c" stroke="#8c8c8c" stroke-width="7.6" stroke-linejoin="round"/><polygon points="855.20,143.90 869.60,130.80 870.60,138.10 889.60,138.10 889.60,149.80 870.60,149.80 869.60,157.00" fill="#fff" stroke="#fff" stroke-width="4.2" stroke-linejoin="round"/><polygon points="855.20,143.90 869.60,130.80 870.60,138.10 889.60,138.10 889.60,149.80 870.60,149.80 869.60,157.00" fill="url(#gGreenH)" stroke="url(#gGreenH)" stroke-width="0.6" stroke-linejoin="round"/><polygon points="965.00,143.90 950.60,130.80 949.60,138.10 930.60,138.10 930.60,149.80 949.60,149.80 950.60,157.00" fill="#8c8c8c" stroke="#8c8c8c" stroke-width="7.6" stroke-linejoin="round"/><polygon points="965.00,143.90 950.60,130.80 949.60,138.10 930.60,138.10 930.60,149.80 949.60,149.80 950.60,157.00" fill="#fff" stroke="#fff" stroke-width="4.2" stroke-linejoin="round"/><polygon points="965.00,143.90 950.60,130.80 949.60,138.10 930.60,138.10 930.60,149.80 949.60,149.80 950.60,157.00" fill="url(#gGreenH)" stroke="url(#gGreenH)" stroke-width="0.6" stroke-linejoin="round"/><rect x="1004.2" y="123.5" width="43.7" height="44.5" fill="#f3f3f3"/><rect x="1004.2" y="123.89999999999999" width="43.7" height="1.9" fill="#1a1a1a"/><rect x="1004.2" y="130.0" width="43.7" height="1.9" fill="#1a1a1a"/><rect x="1004.2" y="142.0" width="43.7" height="1.9" fill="#1a1a1a"/><rect x="1004.2" y="148.0" width="43.7" height="1.9" fill="#1a1a1a"/><rect x="1004.2" y="154.1" width="43.7" height="1.9" fill="#1a1a1a"/><rect x="1004.2" y="160.0" width="43.7" height="1.9" fill="#1a1a1a"/><rect x="1004.2" y="166.1" width="43.7" height="1.9" fill="#1a1a1a"/><rect x="1004.2" y="134.3" width="43.7" height="5.3" fill="#fbe34a"/><polygon points="1004.20,132.30 1017.30,132.30 1018.60,124.80 1033.20,137.70 1018.60,150.20 1017.30,143.20 1004.20,143.20" fill="#8c8c8c" stroke="#8c8c8c" stroke-width="7.6" stroke-linejoin="round"/><polygon points="1004.20,132.30 1017.30,132.30 1018.60,124.80 1033.20,137.70 1018.60,150.20 1017.30,143.20 1004.20,143.20" fill="#fff" stroke="#fff" stroke-width="4.2" stroke-linejoin="round"/><polygon points="1004.20,132.30 1017.30,132.30 1018.60,124.80 1033.20,137.70 1018.60,150.20 1017.30,143.20 1004.20,143.20" fill="url(#gGreenH)" stroke="url(#gGreenH)" stroke-width="0.6" stroke-linejoin="round"/><rect x="1078.9" y="122.7" width="42.4" height="4.6" rx="2.3" fill="#fff" stroke="#8a8a8a" stroke-width="1.8"/><polygon points="1100.00,132.60 1086.40,148.00 1094.10,148.00 1094.10,161.60 1105.90,161.60 1105.90,148.00 1113.60,148.00" fill="#8c8c8c" stroke="#8c8c8c" stroke-width="7.6" stroke-linejoin="round"/><polygon points="1100.00,132.60 1086.40,148.00 1094.10,148.00 1094.10,161.60 1105.90,161.60 1105.90,148.00 1113.60,148.00" fill="#fff" stroke="#fff" stroke-width="4.2" stroke-linejoin="round"/><polygon points="1100.00,132.60 1086.40,148.00 1094.10,148.00 1094.10,161.60 1105.90,161.60 1105.90,148.00 1113.60,148.00" fill="url(#gGreen)" stroke="url(#gGreen)" stroke-width="0.6" stroke-linejoin="round"/><rect x="1154.9" y="160.3" width="42.4" height="4.6" rx="2.3" fill="#fff" stroke="#8a8a8a" stroke-width="1.8"/><polygon points="1176.00,155.00 1162.40,139.60 1170.10,139.60 1170.10,126.00 1181.90,126.00 1181.90,139.60 1189.60,139.60" fill="#8c8c8c" stroke="#8c8c8c" stroke-width="7.6" stroke-linejoin="round"/><polygon points="1176.00,155.00 1162.40,139.60 1170.10,139.60 1170.10,126.00 1181.90,126.00 1181.90,139.60 1189.60,139.60" fill="#fff" stroke="#fff" stroke-width="4.2" stroke-linejoin="round"/><polygon points="1176.00,155.00 1162.40,139.60 1170.10,139.60 1170.10,126.00 1181.90,126.00 1181.90,139.60 1189.60,139.60" fill="url(#gGreen)" stroke="url(#gGreen)" stroke-width="0.6" stroke-linejoin="round"/><rect x="1230.1" y="122" width="43.8" height="44" fill="#f2f2ee"/><rect x="1230.1" y="121.9" width="43.8" height="2" fill="#1a1c1c"/><rect x="1230.1" y="164" width="43.8" height="2" fill="#1a1c1c"/><rect x="1230.1" y="128.0" width="43.8" height="1.8" fill="#b5b6ae"/><rect x="1230.1" y="134.1" width="43.8" height="1.8" fill="#b5b6ae"/><rect x="1230.1" y="140.0" width="43.8" height="1.8" fill="#b5b6ae"/><rect x="1230.1" y="145.9" width="43.8" height="1.8" fill="#b5b6ae"/><rect x="1230.1" y="151.79999999999998" width="43.8" height="1.8" fill="#b5b6ae"/><rect x="1230.1" y="158.0" width="43.8" height="1.8" fill="#b5b6ae"/><path d="M1250.3,156 Q1250,153.8 1253,153.8 L1269.5,153.8 Q1272.6,153.8 1271.9,156.4 Q1268.5,161.8 1262.6,165.3 Q1261,166.2 1259.4,165.3 Q1253.6,161.8 1250.3,156 Z" fill="#2f65ae"/><linearGradient id="gPress" x1="0" y1="0" x2="0" y2="1"><stop offset="0" stop-color="#e3e3e3"/><stop offset="1" stop-color="#bababa"/></linearGradient><linearGradient id="gPressL" x1="0" y1="0" x2="1" y2="0"><stop offset="0" stop-color="#000" stop-opacity="0.32"/><stop offset="0.09" stop-color="#000" stop-opacity="0.05"/><stop offset="0.91" stop-color="#000" stop-opacity="0.05"/><stop offset="1" stop-color="#000" stop-opacity="0.32"/></linearGradient><rect x="1314.1" y="111.9" width="67.6" height="66" fill="url(#gPress)"/><rect x="1314.1" y="111.9" width="67.6" height="66" fill="url(#gPressL)"/><rect x="1325.9" y="122" width="44.2" height="44" fill="#f0f0f0"/><rect x="1325.9" y="121.85" width="44.2" height="1.9" fill="#1c1c1c"/><rect x="1325.9" y="128.05" width="44.2" height="1.9" fill="#d02222"/><rect x="1325.9" y="133.95000000000002" width="44.2" height="1.9" fill="#28548e"/><rect x="1325.9" y="140.05" width="44.2" height="1.9" fill="#6cc122"/><rect x="1325.9" y="146.05" width="44.2" height="1.9" fill="#28548e"/><rect x="1325.9" y="151.95000000000002" width="44.2" height="1.9" fill="#6a3e6e"/><rect x="1325.9" y="157.85000000000002" width="44.2" height="1.9" fill="#c19b19"/><rect x="1325.9" y="164.05" width="44.2" height="1.9" fill="#1c1c1c"/><circle cx="1438.8" cy="138.9" r="13.9" fill="#efefef" stroke="#2b2b2b" stroke-width="1.7"/><path d="M1451.6,151 L1461.6,161" stroke="#2b2f31" stroke-width="6.1" stroke-linecap="round"/><path d="M1432.1,138.9 L1445.9,138.9 M1438.8,132.2 L1438.8,145.7" stroke="#222" stroke-width="1.7"/><circle cx="1514.8" cy="138.9" r="13.9" fill="#efefef" stroke="#2b2b2b" stroke-width="1.7"/><path d="M1527.6,151 L1537.6,161" stroke="#2b2f31" stroke-width="6.1" stroke-linecap="round"/><path d="M1508.1,138.9 L1521.9,138.9" stroke="#222" stroke-width="1.7"/><circle cx="1590.8" cy="138.9" r="13.9" fill="#efefef" stroke="#2b2b2b" stroke-width="1.7"/><path d="M1603.6,151 L1613.6,161" stroke="#2b2f31" stroke-width="6.1" stroke-linecap="round"/><path d="M1584.1,137 L1597.9,137 M1584.1,141.1 L1597.9,141.1" stroke="#222" stroke-width="1.7"/><rect x="1650.1" y="122" width="43.8" height="44" fill="#f2f2ee"/><rect x="1650.1" y="128.0" width="43.8" height="1.8" fill="#b5b6ae"/><rect x="1650.1" y="134.1" width="43.8" height="1.8" fill="#b5b6ae"/><rect x="1650.1" y="140.0" width="43.8" height="1.8" fill="#b5b6ae"/><rect x="1650.1" y="145.9" width="43.8" height="1.8" fill="#b5b6ae"/><rect x="1650.1" y="151.79999999999998" width="43.8" height="1.8" fill="#b5b6ae"/><rect x="1650.1" y="158.0" width="43.8" height="1.8" fill="#b5b6ae"/><rect x="1650.1" y="121.9" width="43.8" height="2" fill="#1a1c1c"/><rect x="1650.1" y="164" width="43.8" height="2" fill="#1a1c1c"/><rect x="1660" y="122" width="2" height="44" fill="#8c8c8a"/><rect x="1676" y="122" width="2" height="44" fill="#8c8c8a"/><path d="M1654.2,130 Q1654.2,127.5 1656.5,129 L1661.5,135.7 L1656.5,142.4 Q1654.2,144 1654.2,141.4 Z" fill="#2f65ae"/><path d="M1684,130 Q1684,127.5 1681.7,129 L1676.5,135.7 L1681.7,142.4 Q1684,144 1684,141.4 Z" fill="#2f65ae"/><path d="M124,193.5 Q124,191.8 126,191.8 L138,191.8 Q140,191.8 140,193.5 L140,218.6 Q140,220.6 138.6,219.4 L132,213 L125.4,219.4 Q124,220.6 124,218.6 Z" fill="url(#gBk)"/><path d="M1600,202.5 L1620,202.5 L1620,198 L1632.5,206 L1620,214 L1620,209.5 L1600,209.5 Z" fill="#fff" stroke="#fff" stroke-width="1" stroke-linejoin="round"/><linearGradient id="gTitle" x1="0" y1="0" x2="0" y2="1"><stop offset="0" stop-color="#86b2ea"/><stop offset="1" stop-color="#6a94d6"/></linearGradient><path d="M911.2,100.2 C914,86 923,75 941,71.3 C937.6,80 937.2,91 940.6,100.2 Z" fill="url(#gTitle)"/><path d="M912.5,98 Q926,94 940,97.5 L940.6,100.2 L911.2,100.2 Z" fill="#a9c6ec"/><circle cx="145.9" cy="1437.9" r="13.1" fill="#e3dd60" stroke="#6f6d2c" stroke-width="1.9"/><rect x="183.2" y="1424.2" width="20.8" height="27.2" fill="#f4f4f2"/><rect x="183.2" y="1424.2" width="20.8" height="6.2" fill="#2a9ade"/><text x="186" y="1437.0" font-family="Liberation Serif" font-size="6.5" fill="#8a8a86" textLength="15" lengthAdjust="spacingAndGlyphs">01010</text><text x="186" y="1443.5" font-family="Liberation Serif" font-size="6.5" fill="#8a8a86" textLength="15" lengthAdjust="spacingAndGlyphs">01010</text><text x="186" y="1450.0" font-family="Liberation Serif" font-size="6.5" fill="#8a8a86" textLength="15" lengthAdjust="spacingAndGlyphs">01010</text><path d="M191.5,1442.5 L207,1427" stroke="#f8f8f8" stroke-width="6.5" stroke-linecap="round"/><path d="M193,1441 L207.3,1426.7" stroke="#525252" stroke-width="4.2" stroke-linecap="round"/><path d="M189.5,1444.8 L191.2,1438.8 L195.5,1443.1 Z" fill="#000"/></svg>
</div></div>
</body></html>
